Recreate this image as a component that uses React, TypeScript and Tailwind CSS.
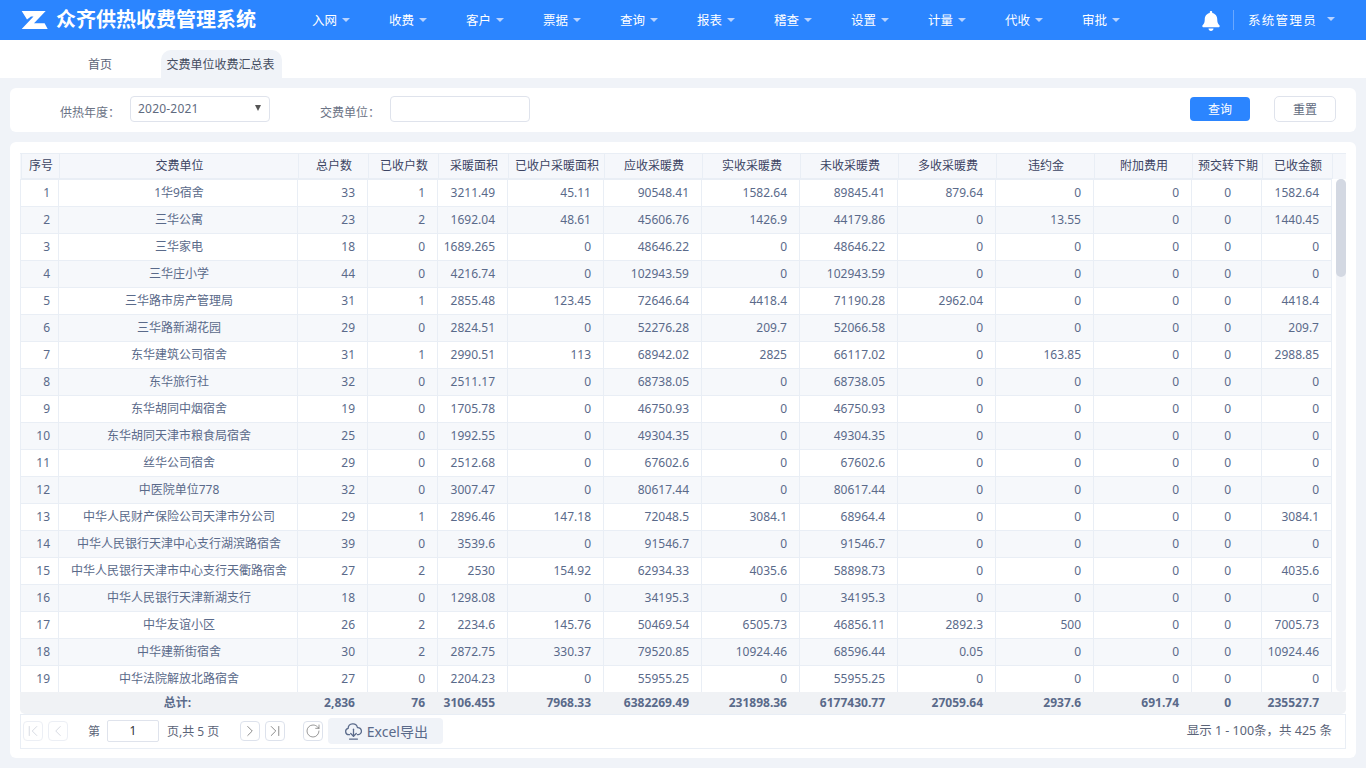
import { FaBell } from "react-icons/fa";
import { ChevronLeft, ChevronRight, RotateCw, ChevronFirst, ChevronLast } from "lucide-react";

const menus = ["入网", "收费", "客户", "票据", "查询", "报表", "稽查", "设置", "计量", "代收", "审批"];

const columns = [
  { title: "序号", width: 38 },
  { title: "交费单位", width: 239 },
  { title: "总户数", width: 70 },
  { title: "已收户数", width: 70 },
  { title: "采暖面积", width: 70 },
  { title: "已收户采暖面积", width: 96 },
  { title: "应收采暖费", width: 98 },
  { title: "实收采暖费", width: 98 },
  { title: "未收采暖费", width: 98 },
  { title: "多收采暖费", width: 98 },
  { title: "违约金", width: 98 },
  { title: "附加费用", width: 98 },
  { title: "预交转下期", width: 70 },
  { title: "已收金额", width: 70 },
];

const rows: (string | number)[][] = [
  ["1华9宿舍", 33, 1, 3211.49, 45.11, 90548.41, 1582.64, 89845.41, 879.64, 0, 0, 0, 1582.64],
  ["三华公寓", 23, 2, 1692.04, 48.61, 45606.76, 1426.9, 44179.86, 0, 13.55, 0, 0, 1440.45],
  ["三华家电", 18, 0, 1689.265, 0, 48646.22, 0, 48646.22, 0, 0, 0, 0, 0],
  ["三华庄小学", 44, 0, 4216.74, 0, 102943.59, 0, 102943.59, 0, 0, 0, 0, 0],
  ["三华路市房产管理局", 31, 1, 2855.48, 123.45, 72646.64, 4418.4, 71190.28, 2962.04, 0, 0, 0, 4418.4],
  ["三华路新湖花园", 29, 0, 2824.51, 0, 52276.28, 209.7, 52066.58, 0, 0, 0, 0, 209.7],
  ["东华建筑公司宿舍", 31, 1, 2990.51, 113, 68942.02, 2825, 66117.02, 0, 163.85, 0, 0, 2988.85],
  ["东华旅行社", 32, 0, 2511.17, 0, 68738.05, 0, 68738.05, 0, 0, 0, 0, 0],
  ["东华胡同中烟宿舍", 19, 0, 1705.78, 0, 46750.93, 0, 46750.93, 0, 0, 0, 0, 0],
  ["东华胡同天津市粮食局宿舍", 25, 0, 1992.55, 0, 49304.35, 0, 49304.35, 0, 0, 0, 0, 0],
  ["丝华公司宿舍", 29, 0, 2512.68, 0, 67602.6, 0, 67602.6, 0, 0, 0, 0, 0],
  ["中医院单位778", 32, 0, 3007.47, 0, 80617.44, 0, 80617.44, 0, 0, 0, 0, 0],
  ["中华人民财产保险公司天津市分公司", 29, 1, 2896.46, 147.18, 72048.5, 3084.1, 68964.4, 0, 0, 0, 0, 3084.1],
  ["中华人民银行天津中心支行湖滨路宿舍", 39, 0, 3539.6, 0, 91546.7, 0, 91546.7, 0, 0, 0, 0, 0],
  ["中华人民银行天津市中心支行天衢路宿舍", 27, 2, 2530, 154.92, 62934.33, 4035.6, 58898.73, 0, 0, 0, 0, 4035.6],
  ["中华人民银行天津新湖支行", 18, 0, 1298.08, 0, 34195.3, 0, 34195.3, 0, 0, 0, 0, 0],
  ["中华友谊小区", 26, 2, 2234.6, 145.76, 50469.54, 6505.73, 46856.11, 2892.3, 500, 0, 0, 7005.73],
  ["中华建新街宿舍", 30, 2, 2872.75, 330.37, 79520.85, 10924.46, 68596.44, 0.05, 0, 0, 0, 10924.46],
  ["中华法院解放北路宿舍", 27, 0, 2204.23, 0, 55955.25, 0, 55955.25, 0, 0, 0, 0, 0],
];

const totals = ["2,836", "76", "3106.455", "7968.33", "6382269.49", "231898.36", "6177430.77", "27059.64", "2937.6", "691.74", "0", "235527.7"];

function Caret({ className }: { className: string }) {
  return <span className={`mb-[3px] inline-block h-0 w-0 border-x-[4px] border-t-[4px] border-x-transparent ${className}`} />;
}

function Colgroup() {
  return (
    <colgroup>
      {columns.map((c) => (
        <col key={c.title} style={{ width: c.width }} />
      ))}
    </colgroup>
  );
}

function PageButton({ children, disabled }: { children: React.ReactNode; disabled?: boolean }) {
  return (
    <button
      type="button"
      className={`flex h-5 w-5 items-center justify-center rounded-[4px] border ${
        disabled ? "border-[#eceff5] text-[#c9ced8]" : "border-[#dde2ec] text-[#666]"
      }`}
    >
      {children}
    </button>
  );
}

export default function App() {
  return (
    <div className="flex h-[768px] w-[1366px] flex-col overflow-hidden bg-[#f0f3f8] font-['Noto_Sans','Noto_Sans_CJK_SC',sans-serif] text-[12px] text-[#5a6a8a]">
      <header className="flex h-10 shrink-0 items-center bg-[#2b85ff] text-white">
        <svg viewBox="0 0 27 20" className="ml-[21px] h-5 w-[27px]" fill="#fff">
          <path d="M0.7 1H24.7L13 13.3H23.6L26.7 19H0.7L12.5 6.5H10L6 9.5Z" />
        </svg>
        <h1 className="ml-[8px] w-[256px] text-[20px] font-bold leading-none">众齐供热收费管理系统</h1>
        <nav className="flex pt-[2px]">
          {menus.map((m) => (
            <div key={m} className="flex w-[77px] items-center text-[12.5px]">
              {m}
              <Caret className="ml-[5px] border-t-[#b9d3ff]" />
            </div>
          ))}
        </nav>
        <FaBell className="ml-[42px] mt-px" size={20} />
        <div className="ml-[12px] h-5 w-px bg-[#6aa8ff]" />
        <div className="ml-[14px] mt-[2px] text-[12.5px] tracking-[1.3px]">系统管理员</div>
        <Caret className="ml-[10px] border-t-[#b9d3ff]" />
      </header>

      <div className="flex h-[38px] shrink-0 items-end bg-white pl-[70px] text-[12px]">
        <div className="flex h-7 w-[60px] items-center justify-center pt-[2px] text-[#5b6478]">首页</div>
        <div className="ml-[31px] flex h-7 w-[121px] items-center justify-center rounded-t-[10px] bg-[#f0f3f8] pr-[2px] pt-[2px] text-[#444c60]">
          交费单位收费汇总表
        </div>
      </div>

      <section className="mx-[10px] mt-[10px] flex h-11 shrink-0 items-center rounded-[6px] bg-white">
        <label className="ml-[50px] mt-[5px] text-[#6b7385]">供热年度：</label>
        <div className="mb-[2px] ml-[10px] flex h-[26px] w-[140px] items-center justify-between rounded-[4px] border border-[#dfe3ec] px-[7px] tracking-[0.2px] text-[#5f6b80]">
          2020-2021
          <span className="mb-[3px] mr-[1px] h-0 w-0 border-x-[3.5px] border-t-[6px] border-x-transparent border-t-[#555]" />
        </div>
        <label className="ml-[50px] mt-[5px] text-[#6b7385]">交费单位：</label>
        <div className="mb-[2px] ml-[10px] h-[26px] w-[140px] rounded-[4px] border border-[#dfe3ec]" />
        <button type="button" className="mb-[2px] ml-auto h-6 w-[60px] rounded-[4px] bg-[#2b85ff] pt-[1px] text-white">
          查询
        </button>
        <button type="button" className="mb-[2px] ml-[24px] mr-[20px] h-[26px] w-[62px] rounded-[5px] border border-[#dfe3ec] pt-[1px] text-[#5f6b80]">
          重置
        </button>
      </section>

      <section className="mx-[10px] mt-[10px] h-[616px] shrink-0 rounded-[6px] bg-white pl-[10px] pr-[10px] pt-[11px]">
        <div className="flex w-[1326px] flex-col">
          <div className="border-t border-[#e9eef5] bg-[#f5f7fb] pl-px">
            <table className="w-[1311px] table-fixed border-collapse">
              <Colgroup />
              <thead>
                <tr className="h-[24px]">
                  {columns.map((c) => (
                    <th key={c.title} className="border-x border-b border-[#e9eef5] p-0 pl-px text-center font-normal text-[#3c4463]">
                      {c.title}
                    </th>
                  ))}
                </tr>
              </thead>
            </table>
          </div>
          <div className="relative h-[513px] overflow-hidden">
            <table className="w-[1311px] table-fixed border-collapse">
              <Colgroup />
              <tbody>
                {rows.map((row, i) => (
                  <tr key={i} className={`h-[27px] ${i % 2 ? "bg-[#f6f8fb]" : "bg-white"}`}>
                    <td className="border border-[#e9eef5] p-0 pr-[8px] text-right">{i + 1}</td>
                    <td className="border border-[#e9eef5] p-0 pl-[2px] text-center">{row[0]}</td>
                    {row.slice(1).map((v, j) => (
                      <td key={j} className={`border border-[#e9eef5] p-0 ${j === 10 ? "pr-[30px]" : "pr-[12px]"} text-right`}>
                        {v}
                      </td>
                    ))}
                  </tr>
                ))}
              </tbody>
            </table>
            <div className="absolute right-0 top-0 h-full w-[10px] rounded-[5px] bg-[#f2f4f8]">
              <div className="h-[98px] w-full rounded-[5px] bg-[#d3d8e2]" />
            </div>
          </div>
          <div className="h-[22px] rounded-b-[5px] bg-[#f0f2f5]">
            <table className="h-full w-[1311px] table-fixed border-collapse font-bold">
              <Colgroup />
              <tbody>
                <tr>
                  <td />
                  <td className="p-0 text-center">总计:</td>
                  {totals.map((t, j) => (
                    <td key={j} className={`p-0 ${j === 10 ? "pr-[30px]" : "pr-[12px]"} text-right`}>
                      {t}
                    </td>
                  ))}
                </tr>
              </tbody>
            </table>
          </div>
          <div className="flex h-[35px] items-center border border-[#e9eef5] pl-[2px] pr-[13px] text-[#5b6478]">
            <PageButton disabled>
              <ChevronFirst size={20} strokeWidth={1} />
            </PageButton>
            <div className="ml-[5px]">
              <PageButton disabled>
                <ChevronLeft size={20} strokeWidth={1} />
              </PageButton>
            </div>
            <span className="ml-[20px] pt-px">第</span>
            <div className="ml-[7px] flex h-[22px] w-[52px] items-center justify-center rounded-[2px] border border-[#dfe3ec] text-[#333]">1</div>
            <span className="ml-[8px] pt-px">页,共 5 页</span>
            <div className="ml-[21px]">
              <PageButton>
                <ChevronRight size={20} strokeWidth={1} />
              </PageButton>
            </div>
            <div className="ml-[5px]">
              <PageButton>
                <ChevronLast size={20} strokeWidth={1} />
              </PageButton>
            </div>
            <div className="ml-[18px]">
              <PageButton>
                <RotateCw size={16} strokeWidth={1} />
              </PageButton>
            </div>
            <button type="button" className="ml-[5px] flex h-[26px] w-[115px] items-center justify-center gap-[4px] rounded-[4px] bg-[#f0f3f8] text-[14px] text-[#5a6a8a]">
              <svg viewBox="0 0 24 24" width="19" height="19" fill="none" stroke="currentColor" strokeWidth="1.6" strokeLinecap="round" strokeLinejoin="round">
                <path d="M7 16H6a4 4 0 0 1-.8-7.9A6 6 0 0 1 17 7a4.5 4.5 0 0 1 1 9h-1" />
                <path d="M12 9v9" />
                <path d="M8.5 14.5 12 18l3.5-3.5" />
                <path d="M7 21.5h10" />
              </svg>
              Excel导出
            </button>
            <span className="ml-auto text-[12.5px]">显示 1 - 100条，共 425 条</span>
          </div>
        </div>
      </section>
    </div>
  );
}
